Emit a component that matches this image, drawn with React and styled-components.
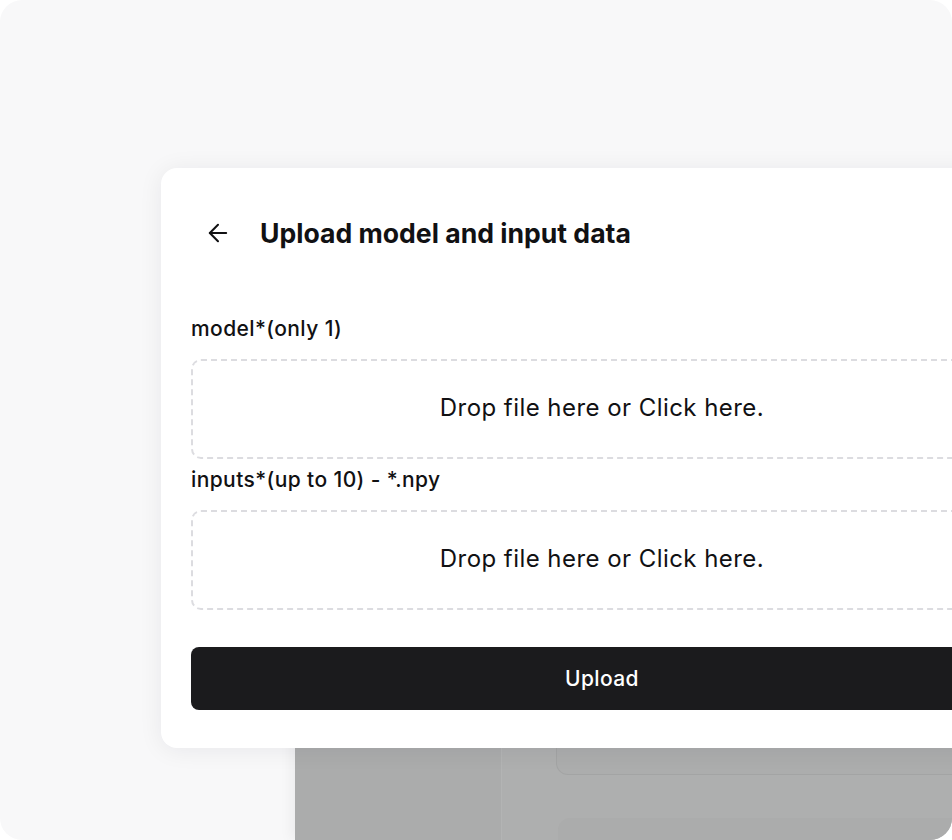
import React from 'react'
import styled, { createGlobalStyle } from 'styled-components'
import { ArrowLeft } from 'lucide-react'

const GlobalStyle = createGlobalStyle`
  html, body {
    margin: 0;
    padding: 0;
    background: #ffffff;
  }
  body {
    font-family: Inter, "Noto Sans", sans-serif;
    color: #111113;
  }
`

const App = () => {
  return (
    <>
      <GlobalStyle />
      <Frame>
        <Backdrop>
          <Sidebar />
          <Main>
            <GhostCard>
              <GhostButton />
            </GhostCard>
            <GhostPanel />
          </Main>
        </Backdrop>
        <Modal>
          <Header>
            <BackButton aria-label="Back">
              <ArrowLeft size={28} strokeWidth={1.75} />
            </BackButton>
            <Title>Upload model and input data</Title>
          </Header>
          <Fields>
            <Field>
              <Label>model*(only 1)</Label>
              <DropZone>Drop file here or Click here.</DropZone>
            </Field>
            <Field>
              <Label>inputs*(up to 10) - *.npy</Label>
              <DropZone>Drop file here or Click here.</DropZone>
            </Field>
          </Fields>
          <UploadButton>Upload</UploadButton>
        </Modal>
      </Frame>
    </>
  )
}

const Frame = styled.div`
  position: relative;
  width: 952px;
  height: 840px;
  border-radius: 22px;
  background: #f8f8f9;
  overflow: hidden;
`

// dimmed app view that sits behind the dialog
const Backdrop = styled.div`
  position: absolute;
  left: 295px;
  top: 600px;
  right: 0;
  bottom: 0;
  display: flex;
  background: #aeafaf;
  box-shadow: -4px 0 12px rgba(0, 0, 0, 0.05);
`

const Sidebar = styled.div`
  flex: none;
  width: 206px;
  background: #abacac;
  border-right: 1px solid #b3b4b4;
`

const Main = styled.div`
  flex: 1;
  min-width: 0;
  display: flex;
  flex-direction: column;
  gap: 43px;
  padding-left: 54px;
`

const GhostCard = styled.div`
  flex: none;
  box-sizing: border-box;
  width: 430px;
  height: 175px;
  display: flex;
  align-items: flex-end;
  justify-content: flex-end;
  padding: 0 43px 26px 0;
  border: 1px solid #a3a4a4;
  border-top: none;
  border-radius: 0 0 0 12px;
  background: #acadad;
`

const GhostButton = styled.div`
  width: 76px;
  height: 40px;
  border-radius: 6px;
  background: #2b2b2c;
`

const GhostPanel = styled.div`
  flex: 1;
  margin-left: 2px;
  border-radius: 12px 0 0 0;
  background: #abacac;
`

const Modal = styled.div`
  position: absolute;
  left: 161px;
  top: 168px;
  box-sizing: border-box;
  width: 882px;
  display: flex;
  flex-direction: column;
  padding: 40px 30px 38px;
  background: #ffffff;
  border-radius: 16px;
  box-shadow: 0 2px 24px rgba(20, 20, 40, 0.07);
`

const Header = styled.div`
  display: flex;
  align-items: center;
  gap: 28px;
  height: 50px;
  padding-left: 13px;
`

const BackButton = styled.button`
  display: flex;
  align-items: center;
  justify-content: center;
  padding: 0;
  border: none;
  background: none;
  color: #111113;
  cursor: pointer;
`

const Title = styled.h1`
  margin: 0;
  font-size: 26.6px;
  font-weight: 700;
  color: #111113;
`

const Fields = styled.div`
  display: flex;
  flex-direction: column;
  gap: 9px;
  margin-top: 59px;
`

const Field = styled.div`
  display: flex;
  flex-direction: column;
  gap: 18px;
`

const Label = styled.label`
  font-size: 21px;
  line-height: 24px;
  font-weight: 500;
  letter-spacing: 0.4px;
  color: #111113;
`

const DropZone = styled.div`
  box-sizing: border-box;
  height: 100px;
  display: flex;
  align-items: center;
  justify-content: center;
  padding-bottom: 3px;
  border: 2px dashed #dcdce0;
  border-radius: 10px;
  font-size: 24px;
  letter-spacing: 0.45px;
  color: #111113;
  cursor: pointer;
`

const UploadButton = styled.button`
  margin-top: 37px;
  height: 63px;
  border: none;
  border-radius: 8px;
  background: #1b1b1d;
  color: #ffffff;
  font-family: Inter, "Noto Sans", sans-serif;
  font-size: 21px;
  font-weight: 500;
  letter-spacing: 0.4px;
  cursor: pointer;
`

export default App
